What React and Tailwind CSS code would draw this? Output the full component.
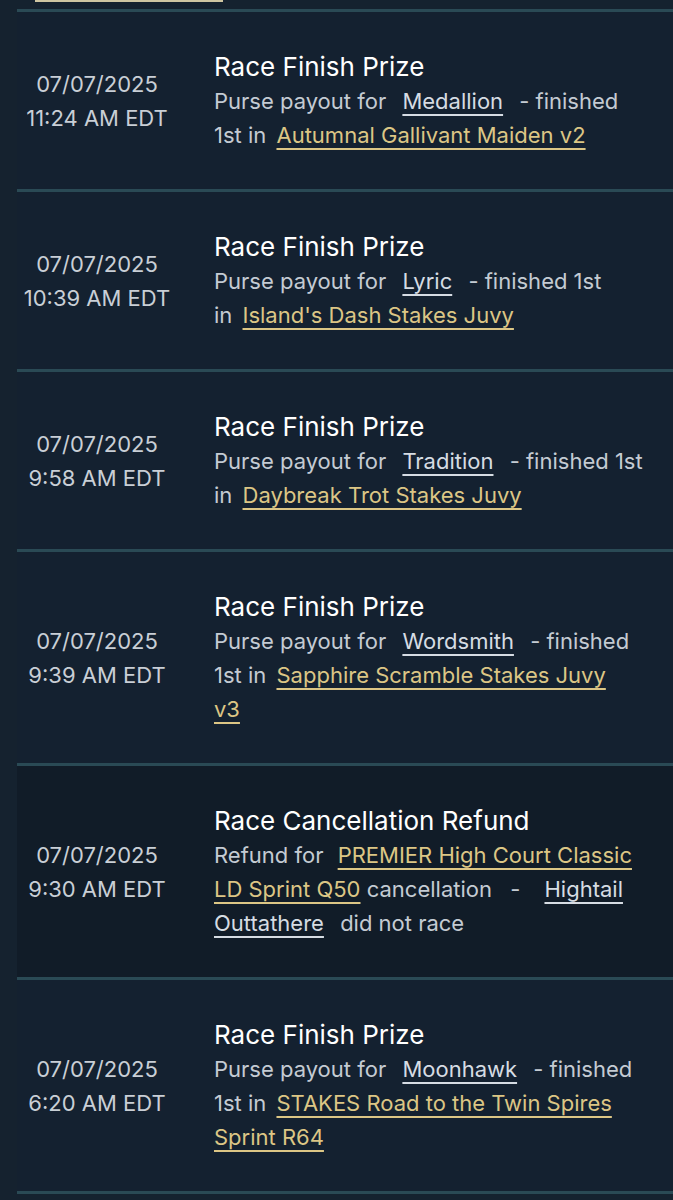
function HorseLink({ children, className = 'mx-[10px]' }) {
  return (
    <a className={`text-[#d6dce3] underline decoration-[1.5px] underline-offset-[5px] ${className}`}>
      {children}
    </a>
  );
}

function RaceLink({ children, className = 'ml-[4px]' }) {
  return (
    <a className={`text-[#dcc685] underline decoration-[1.5px] underline-offset-[5px] ${className}`}>
      {children}
    </a>
  );
}

const rows = [
  {
    time: '11:24 AM EDT',
    title: 'Race Finish Prize',
    body: (
      <>
        Purse payout for <HorseLink>Medallion</HorseLink> - finished
        <br />
        1st in <RaceLink>Autumnal Gallivant Maiden v2</RaceLink>
      </>
    ),
  },
  {
    time: '10:39 AM EDT',
    title: 'Race Finish Prize',
    body: (
      <>
        Purse payout for <HorseLink>Lyric</HorseLink> - finished 1st
        <br />
        in <RaceLink>Island's Dash Stakes Juvy</RaceLink>
      </>
    ),
  },
  {
    time: '9:58 AM EDT',
    title: 'Race Finish Prize',
    body: (
      <>
        Purse payout for <HorseLink>Tradition</HorseLink> - finished 1st
        <br />
        in <RaceLink>Daybreak Trot Stakes Juvy</RaceLink>
      </>
    ),
  },
  {
    time: '9:39 AM EDT',
    title: 'Race Finish Prize',
    body: (
      <>
        Purse payout for <HorseLink>Wordsmith</HorseLink> - finished
        <br />
        1st in{' '}
        <RaceLink>
          Sapphire Scramble Stakes Juvy
          <br />
          v3
        </RaceLink>
      </>
    ),
  },
  {
    time: '9:30 AM EDT',
    title: 'Race Cancellation Refund',
    dark: true,
    body: (
      <>
        Refund for{' '}
        <RaceLink className="ml-[8px]">
          PREMIER High Court Classic
          <br />
          LD Sprint Q50
        </RaceLink>{' '}
        cancellation <span className="ml-[12px] mr-[10px]">-</span>{' '}
        <HorseLink className="ml-[8px]">
          Hightail
          <br />
          Outtathere
        </HorseLink>{' '}
        <span className="ml-[10px]">did not race</span>
      </>
    ),
  },
  {
    time: '6:20 AM EDT',
    title: 'Race Finish Prize',
    body: (
      <>
        Purse payout for <HorseLink>Moonhawk</HorseLink> - finished
        <br />
        1st in{' '}
        <RaceLink>
          STAKES Road to the Twin Spires
          <br />
          Sprint R64
        </RaceLink>
      </>
    ),
  },
];

export default function App() {
  return (
    <div
      className="min-h-screen bg-[#15222f] pb-6"
      style={{ fontFamily: 'Inter, "Noto Sans", sans-serif' }}
    >
      <div className="h-[9px] pl-[35px]">
        <div className="h-[2px] w-[188px] bg-[#cfc6a2]" />
      </div>
      <div className="pl-[17px]">
        {rows.map((row, i) => (
          <div
            key={i}
            className={`flex items-center border-t-[3px] border-[#2a4a55] py-[37px] ${
              row.dark ? 'bg-[#111c28]' : 'bg-[#142130]'
            }`}
          >
            <div className="w-[160px] shrink-0 text-center text-[22px] leading-[34px] text-[#c9cfd6]">
              <div>07/07/2025</div>
              <div>{row.time}</div>
            </div>
            <div className="flex-1 pl-[37px]">
              <h3 className="text-[26px] leading-[35px] text-white">{row.title}</h3>
              <p className="whitespace-nowrap text-[22px] leading-[34px] text-[#c4cbd3]">
                {row.body}
              </p>
            </div>
          </div>
        ))}
        <div className="border-t-[3px] border-[#2a4a55]" />
      </div>
    </div>
  );
}
